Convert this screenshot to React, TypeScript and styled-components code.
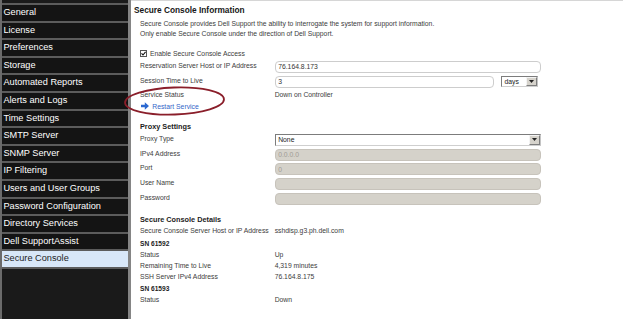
import styled, { createGlobalStyle } from "styled-components";

const GlobalStyle = createGlobalStyle`
  html, body {
    margin: 0;
    padding: 0;
    background: #fff;
  }
  body {
    width: 623px;
    height: 319px;
    overflow: hidden;
    font-family: "Liberation Sans", Arial, sans-serif;
  }
`;

const Page = styled.div`
  position: relative;
  display: flex;
  width: 623px;
  height: 319px;
  overflow: hidden;
`;

const Sidebar = styled.nav`
  flex-shrink: 0;
  box-sizing: border-box;
  width: 130.7px;
  padding-top: 3px;
  background: #1a1a1a;
  border-left: 2.7px solid #6b6b6b;
  border-right: 3px solid #858585;
`;

const NavItem = styled.div<{ $active?: boolean }>`
  height: 15.6px;
  padding-left: 1.4px;
  border-top: 2px solid #5c5c5c;
  font-size: 9.2px;
  line-height: 15.6px;
  white-space: nowrap;
  color: ${(p) => (p.$active ? "#1e1e1e" : "#ffffff")};
  background: ${(p) => (p.$active ? "#d8e7f8" : "#141414")};
  &:last-child {
    border-bottom: 2px solid #5c5c5c;
  }
`;

const Main = styled.main`
  flex: 1;
  padding-left: 3.3px;
  border-top: 1px solid #d6d6d6;
  color: #3c3c3c;
  font-size: 6.8px;
`;

const Title = styled.h1`
  margin: 3px 0 0;
  height: 13px;
  font-size: 8.3px;
  line-height: 13px;
  font-weight: bold;
  color: #161616;
`;

const Section = styled.div`
  padding-left: 6px;
`;

const Desc = styled.p`
  margin: 2px 0 0;
  line-height: 10px;
  white-space: nowrap;
`;

const CheckRow = styled.label`
  display: flex;
  align-items: center;
  gap: 3px;
  height: 12px;
  margin-top: 8px;
`;

const CheckBox = styled.span`
  display: flex;
  align-items: center;
  justify-content: center;
  box-sizing: border-box;
  width: 7px;
  height: 7px;
  border: 1px solid #555;
  background: #fff;
`;

const FormRow = styled.div<{ $gap?: number; $h?: number }>`
  display: grid;
  grid-template-columns: 134.7px 266px;
  height: ${(p) => p.$h ?? 12}px;
  margin-top: ${(p) => p.$gap ?? 2.75}px;
`;

const Label = styled.span`
  align-self: start;
  line-height: 9px;
  white-space: nowrap;
`;

const TextLine = styled.div<{ $gap?: number; $h?: number }>`
  display: grid;
  grid-template-columns: 134.7px 1fr;
  margin-top: ${(p) => p.$gap ?? 0}px;
  line-height: ${(p) => p.$h ?? 11}px;
  white-space: nowrap;
`;

const Heading = styled.div<{ $gap?: number; $size?: number; $h?: number }>`
  margin-top: ${(p) => p.$gap ?? 0}px;
  font-size: ${(p) => p.$size ?? 7.3}px;
  line-height: ${(p) => p.$h ?? 10}px;
  font-weight: bold;
  color: #1c1c1c;
  white-space: nowrap;
`;

const Field = styled.input`
  box-sizing: border-box;
  width: 100%;
  height: 100%;
  margin: 0;
  padding: 0 0 0 2.5px;
  border: 1px solid #cdcdcd;
  border-radius: 4px;
  background: #fff;
  color: #333;
  font-family: inherit;
  font-size: 6.8px;
  outline: none;
  &:disabled {
    border-color: #c7c3bb;
    background: #d5d2ca;
    color: #a09c95;
  }
`;

const SplitCell = styled.div`
  display: flex;
  align-items: center;
  gap: 7px;
`;

const Select = styled.div<{ $w?: number; $h?: number }>`
  display: flex;
  align-items: center;
  justify-content: space-between;
  box-sizing: border-box;
  width: ${(p) => (p.$w ? `${p.$w}px` : "100%")};
  height: ${(p) => p.$h ?? 12}px;
  padding-left: 2.5px;
  border: 1px solid #7c7c7c;
  border-right-color: #c4c4c4;
  border-bottom-color: #cfcfcf;
  background: #fff;
  color: #222;
  font-size: 6.8px;
`;

const SelectButton = styled.span`
  display: flex;
  align-items: center;
  justify-content: center;
  box-sizing: border-box;
  width: 11px;
  height: 100%;
  background: #d6d3cc;
  border: 1px solid;
  border-color: #f4f4f4 #7e7e7e #7e7e7e #f4f4f4;
`;

const Arrow = () => (
  <svg width="5" height="3" viewBox="0 0 5 3">
    <path d="M0 0 H5 L2.5 3 Z" fill="#222" />
  </svg>
);

const LinkRow = styled.a`
  display: flex;
  align-items: center;
  gap: 3.3px;
  margin-top: 1px;
  height: 10px;
  padding-left: 1px;
  color: #3466c9;
  text-decoration: none;
`;

const Mark = styled.svg`
  position: absolute;
  left: 121px;
  top: 84px;
  pointer-events: none;
`;

const navItems = [
  "General",
  "License",
  "Preferences",
  "Storage",
  "Automated Reports",
  "Alerts and Logs",
  "Time Settings",
  "SMTP Server",
  "SNMP Server",
  "IP Filtering",
  "Users and User Groups",
  "Password Configuration",
  "Directory Services",
  "Dell SupportAssist",
  "Secure Console",
];

export default function App() {
  return (
    <Page>
      <GlobalStyle />
      <Sidebar>
        {navItems.map((n) => (
          <NavItem key={n} $active={n === "Secure Console"}>
            {n}
          </NavItem>
        ))}
      </Sidebar>
      <Main>
        <Title>Secure Console Information</Title>
        <Section>
          <Desc>
            Secure Console provides Dell Support the ability to interrogate the system for support information.
            <br />
            Only enable Secure Console under the direction of Dell Support.
          </Desc>
          <CheckRow>
            <CheckBox>
              <svg width="5" height="5" viewBox="0 0 5 5">
                <path d="M0.5 2.4 L2 4 L4.6 0.8" stroke="#111" strokeWidth="1.1" fill="none" />
              </svg>
            </CheckBox>
            Enable Secure Console Access
          </CheckRow>
          <FormRow $gap={1.5}>
            <Label>Reservation Server Host or IP Address</Label>
            <Field readOnly defaultValue="76.164.8.173" />
          </FormRow>
          <FormRow $gap={3} $h={12.5}>
            <Label>Session Time to Live</Label>
            <SplitCell>
              <Field readOnly defaultValue="3" style={{ width: 219.3 }} />
              <Select $w={37} $h={11}>
                days
                <SelectButton>
                  <Arrow />
                </SelectButton>
              </Select>
            </SplitCell>
          </FormRow>
          <TextLine $gap={2} $h={10}>
            <span>Service Status</span>
            <span>Down on Controller</span>
          </TextLine>
          <LinkRow href="#">
            <svg width="8" height="8" viewBox="0 0 8 8">
              <path d="M0 2.7 H3.8 V0.3 L8 4 L3.8 7.7 V5.3 H0 Z" fill="#2a68d0" />
            </svg>
            Restart Service
          </LinkRow>

          <Heading $gap={10.7}>Proxy Settings</Heading>
          <FormRow $gap={2.3}>
            <Label>Proxy Type</Label>
            <Select>
              None
              <SelectButton>
                <Arrow />
              </SelectButton>
            </Select>
          </FormRow>
          <FormRow>
            <Label>IPv4 Address</Label>
            <Field disabled defaultValue="0.0.0.0" />
          </FormRow>
          <FormRow>
            <Label>Port</Label>
            <Field disabled defaultValue="0" />
          </FormRow>
          <FormRow>
            <Label>User Name</Label>
            <Field disabled defaultValue="" />
          </FormRow>
          <FormRow>
            <Label>Password</Label>
            <Field disabled type="password" defaultValue="" />
          </FormRow>

          <Heading $gap={9.5} $h={11}>Secure Console Details</Heading>
          <TextLine>
            <span>Secure Console Server Host or IP Address</span>
            <span>sshdisp.g3.ph.dell.com</span>
          </TextLine>
          <Heading $gap={1.5} $size={6.6} $h={11}>SN 61592</Heading>
          <TextLine>
            <span>Status</span>
            <span>Up</span>
          </TextLine>
          <TextLine>
            <span>Remaining Time to Live</span>
            <span>4,319 minutes</span>
          </TextLine>
          <TextLine>
            <span>SSH Server IPv4 Address</span>
            <span>76.164.8.175</span>
          </TextLine>
          <Heading $gap={1.5} $size={6.6} $h={11}>SN 61593</Heading>
          <TextLine>
            <span>Status</span>
            <span>Down</span>
          </TextLine>
        </Section>
      </Main>
      <Mark width="108" height="36" viewBox="0 0 108 36">
        <ellipse
          cx="53.5"
          cy="17"
          rx="49.5"
          ry="13.5"
          fill="none"
          stroke="#8a1e2a"
          strokeWidth="1.8"
          transform="rotate(-2 53.5 17)"
        />
      </Mark>
    </Page>
  );
}
